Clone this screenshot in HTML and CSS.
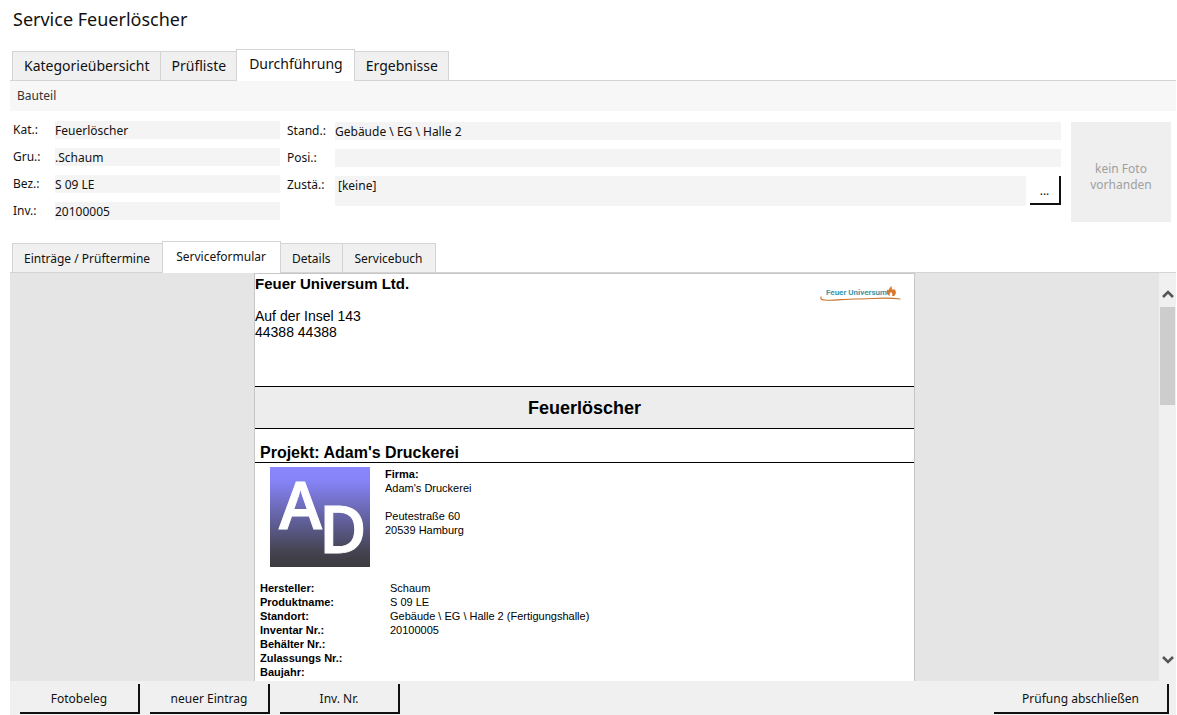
FILE: index.html
```html
<!DOCTYPE html>
<html lang="de">
<head>
<meta charset="utf-8">
<meta name="viewport" content="width=device-width, initial-scale=1">
<title>Service Feuerlöscher</title>
<link rel="stylesheet" href="styles.css">
</head>
<body>
<main class="page">
  <h1 class="title">Service Feuerlöscher</h1>

  <nav class="tabs tabs-main" role="tablist" aria-label="Service">
    <button class="tab" type="button" role="tab">Kategorieübersicht</button>
    <button class="tab" type="button" role="tab">Prüfliste</button>
    <button class="tab active" type="button" role="tab" aria-selected="true">Durchführung</button>
    <button class="tab" type="button" role="tab">Ergebnisse</button>
  </nav>

  <h2 class="section">Bauteil</h2>

  <form class="component">
    <div class="fields fields-left">
      <label for="kat">Kat.:</label><input id="kat" value="Feuerlöscher" readonly>
      <label for="gru">Gru.:</label><input id="gru" value=".Schaum" readonly>
      <label for="bez">Bez.:</label><input id="bez" value="S 09 LE" readonly>
      <label for="inv">Inv.:</label><input id="inv" value="20100005" readonly>
    </div>
    <div class="fields fields-right">
      <label for="stand">Stand.:</label><input id="stand" value="Gebäude \ EG \ Halle 2" readonly>
      <label for="posi">Posi.:</label><input id="posi" value="" readonly>
      <label for="zust">Zustä.:</label>
      <div class="state">
        <textarea id="zust" rows="1" readonly>[keine]</textarea>
        <button class="button more" type="button" aria-label="Zustand wählen">...</button>
      </div>
    </div>
    <div class="photo">kein Foto<br>vorhanden</div>
  </form>

  <nav class="tabs tabs-sub" role="tablist" aria-label="Bauteil">
    <button class="tab" type="button" role="tab">Einträge / Prüftermine</button>
    <button class="tab active" type="button" role="tab" aria-selected="true">Serviceformular</button>
    <button class="tab" type="button" role="tab">Details</button>
    <button class="tab" type="button" role="tab">Servicebuch</button>
  </nav>

  <section class="viewer">
    <div class="canvas">
      <article class="sheet">
        <header class="letterhead">
          <address class="sender">
            <strong>Feuer Universum Ltd.</strong>
            <span>Auf der Insel 143</span>
            <span>44388 44388</span>
          </address>
          <svg class="brand" viewBox="0 0 84 20" role="img" aria-label="Feuer Universum">
            <text class="brand-name" x="7" y="11">Feuer Universum</text>
            <path d="M69 11c-3-3-1-6 1-5 0-2 1-3 3-4-1 2 0 3 1 4l1-1c3 2 2 6 0 7l-2 0c1-2 0-3-1-4-1 1-2 2-1 4z" fill="#d9792f"/>
            <path d="M2 13c-1 2 1 3 4 3 8 1 18-1 30-1 18 0 30-2 45 0" fill="none" stroke="#c9752f" stroke-width="1.2" stroke-linecap="round"/>
          </svg>
        </header>
        <h2 class="sheet-title">Feuerlöscher</h2>
        <h3 class="project">Projekt: Adam's Druckerei</h3>
        <div class="company">
          <svg class="logo" viewBox="0 0 100 100" role="img" aria-label="AD">
            <defs>
              <linearGradient id="fade" x1="0" y1="0" x2="0" y2="1">
                <stop offset="0" stop-color="#8a87ff"/>
                <stop offset=".15" stop-color="#8582f5"/>
                <stop offset=".85" stop-color="#444350"/>
                <stop offset="1" stop-color="#3c3b3f"/>
              </linearGradient>
            </defs>
            <rect width="100" height="100" fill="url(#fade)"/>
            <text class="logo-letter" x="9" y="62">A</text>
            <text class="logo-letter" x="49" y="86">D</text>
          </svg>
          <address class="customer">
            <strong>Firma:</strong>
            <span>Adam's Druckerei</span>
            <span class="street">Peutestraße 60</span>
            <span>20539 Hamburg</span>
          </address>
        </div>
        <dl class="facts">
          <dt>Hersteller:</dt><dd>Schaum</dd>
          <dt>Produktname:</dt><dd>S 09 LE</dd>
          <dt>Standort:</dt><dd>Gebäude \ EG \ Halle 2 (Fertigungshalle)</dd>
          <dt>Inventar Nr.:</dt><dd>20100005</dd>
          <dt>Behälter Nr.:</dt><dd></dd>
          <dt>Zulassungs Nr.:</dt><dd></dd>
          <dt>Baujahr:</dt><dd></dd>
        </dl>
      </article>
    </div>
    <div class="scrollbar">
      <button class="arrow" type="button" aria-label="Nach oben"><svg viewBox="0 0 12 10"><path d="M1 7l5-5 5 5"/></svg></button>
      <div class="thumb"></div>
      <button class="arrow arrow-down" type="button" aria-label="Nach unten"><svg viewBox="0 0 12 10"><path d="M1 3l5 5 5-5"/></svg></button>
    </div>
  </section>

  <footer class="actions">
    <button class="button" type="button">Fotobeleg</button>
    <button class="button" type="button">neuer Eintrag</button>
    <button class="button" type="button">Inv. Nr.</button>
    <button class="button finish" type="button">Prüfung abschließen</button>
  </footer>
</main>
</body>
</html>
```
FILE: styles.css
```css
* { box-sizing: border-box; }

body {
  margin: 0;
  background: #fff;
  color: #111;
  font: 12px/16px "Noto Sans", "Open Sans", sans-serif;
}

h1, h2, h3, dl, dd { margin: 0; }
address { font-style: normal; }
button, input, textarea { font: inherit; color: inherit; border: 0; border-radius: 0; margin: 0; }

.page {
  display: flex;
  flex-direction: column;
  height: 100vh;
  padding: 0 1px 0 10px;
}

.title {
  padding: 7px 3px 18px;
  font-size: 18px;
  font-weight: 400;
  line-height: 24px;
}

.tabs {
  display: flex;
  align-items: flex-end;
  flex: none;
  height: 32px;
  padding-left: 2px;
  border-bottom: 1px solid #d4d4d4;
}
.tab {
  height: 29px;
  margin-right: -1px;
  border: 1px solid #d4d4d4;
  border-bottom: 0;
  background: #f0f0f0;
  white-space: nowrap;
}
.tab.active {
  z-index: 1;
  height: 32px;
  margin-bottom: -1px;
  background: #fff;
}
.tabs-main { font-size: 14px; }
.tabs-main .tab { padding: 0 10px 0 11px; }
.tabs-main .active { padding: 0 11px 4px 12px; }
.tabs-sub .tab { padding: 1px 12px 0 11px; }
.tabs-sub .active { padding: 0 14px 2px 13px; }

.section {
  padding: 7px;
  background: #f7f7f7;
  color: #333;
  font-size: 12px;
  font-weight: 400;
  line-height: 16px;
}

.component {
  display: flex;
  padding: 10px 5px 19px 3px;
}
.fields {
  display: grid;
  align-content: start;
}
.fields-left {
  grid-template-columns: 42px 1fr;
  row-gap: 9px;
  width: 267px;
  margin-right: 7px;
}
.fields-right {
  flex: 1;
  grid-template-columns: 48px 1fr;
  row-gap: 9px;
  margin: 1px 10px 0 0;
}
.fields label { line-height: 18px; }
.fields input, .fields textarea {
  width: 100%;
  height: 18px;
  padding: 1px 0 0;
  background: #f4f4f4;
  line-height: 17px;
}
.state { display: flex; gap: 4px; }
.fields textarea {
  height: 30px;
  padding: 1px 3px;
  line-height: 18px;
  resize: none;
}
.photo {
  display: grid;
  place-content: center;
  width: 100px;
  height: 100px;
  margin-top: 1px;
  padding-top: 10px;
  background: #efefef;
  color: #a0a0a0;
  text-align: center;
}

.button {
  width: 120px;
  height: 30px;
  padding: 2px 0 0;
  border: solid #111;
  border-width: 0 2px 2px 0;
  background: #f0f0f0;
}
.more {
  flex: none;
  width: 31px;
  height: 29px;
  background: #fff;
}

.viewer {
  display: flex;
  flex: 1;
  min-height: 0;
  background: #e5e5e5;
}
.canvas {
  display: flex;
  justify-content: center;
  flex: 1;
  overflow: hidden;
}
.sheet {
  width: 661px;
  height: max-content;
  border: 1px solid #c6c6c6;
  background: #fff;
  color: #000;
  font: 11px/14px "Liberation Sans", Arial, sans-serif;
}
.letterhead {
  display: flex;
  justify-content: space-between;
  height: 112px;
  padding: 2px 11px 0 0;
  font-size: 14px;
  line-height: 16px;
}
.sender strong { display: block; margin-bottom: 16px; font-size: 15px; }
.sender span, .customer span, .customer strong { display: block; }
.brand { width: 84px; height: 20px; margin-top: 8px; }
.brand-name {
  font: bold 8px Roboto, "Open Sans", sans-serif;
  fill: #3f97a8;
}
.sheet-title {
  padding-top: 2px;
  border: solid #000;
  border-width: 1px 0;
  background: #ededed;
  font-size: 18px;
  line-height: 39px;
  text-align: center;
}
.project {
  padding: 14px 5px 0;
  border-bottom: 1px solid #000;
  font-size: 16px;
  line-height: 19px;
}
.company { display: flex; gap: 15px; padding: 4px 15px 14px; }
.logo { width: 100px; height: 100px; }
.logo-letter {
  font: 600 65px "Open Sans", "Noto Sans", sans-serif;
  fill: #fff;
  stroke: #fff;
}
.street { margin-top: 14px; }
.facts {
  display: grid;
  grid-template-columns: 130px 1fr;
  padding: 0 5px 14px;
}
.facts dt { font-weight: 700; }

.scrollbar {
  display: flex;
  flex-direction: column;
  width: 17px;
  padding: 13px 0;
  background: #f0f0f0;
}
.arrow {
  height: 18px;
  padding: 0;
  background: none;
}
.arrow svg { display: block; width: 12px; height: 10px; margin: auto; }
.arrow path { fill: none; stroke: #555; stroke-width: 2.6; }
.arrow-down { margin-top: auto; }
.thumb {
  height: 98px;
  margin: 3px 1px 0;
  background: #cdcdcd;
}

.actions {
  display: flex;
  gap: 10px;
  padding: 3px 7px 1px 10px;
  background: #f0f0f0;
}
.finish { width: 175px; margin-left: auto; }
```
